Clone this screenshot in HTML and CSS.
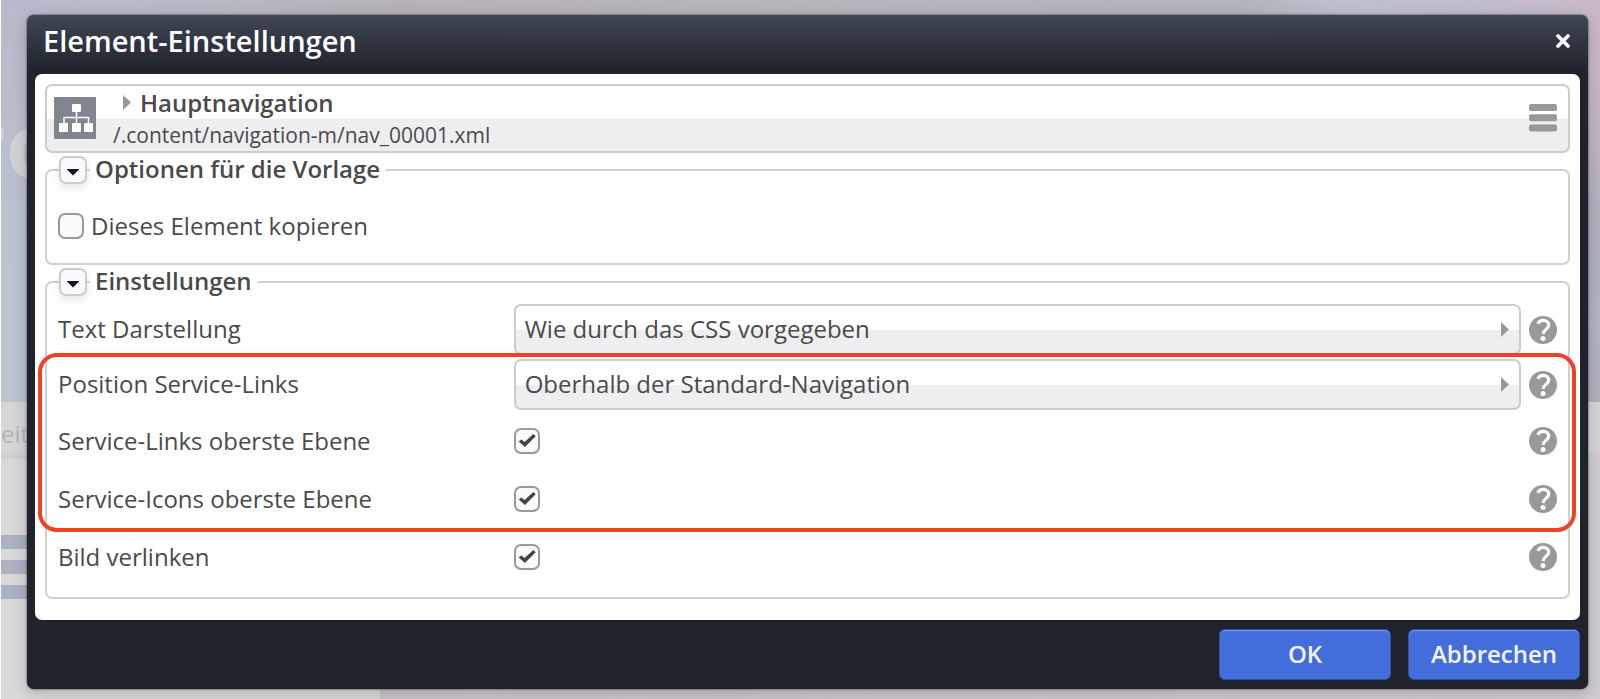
FILE: index.html
```html
<!DOCTYPE html>
<html lang="de">
<head>
<meta charset="utf-8">
<title>Element-Einstellungen</title>
<link rel="stylesheet" href="styles.css">
</head>
<body>
<svg class="symbols" aria-hidden="true">
  <symbol id="help" viewBox="0 0 28 28">
    <circle cx="14" cy="14" r="14" fill="#999"/>
    <path d="M8.8 7.800C10 5.300 11.900 4.400 14.200 4.400c3.200 0 5.500 1.900 5.500 4.600 0 4.200-5.500 4.600-5.500 8.900" fill="none" stroke="#fff" stroke-width="3.200"/>
    <circle cx="14" cy="22.500" r="2.500" fill="#fff"/>
  </symbol>
</svg>
<div class="stage">
  <div class="page" aria-hidden="true">
    <div class="hero"><span class="hero-title">ro</span></div>
    <div class="crumbs">eit</div>
    <div class="content">
      <div class="bars"><i></i><i></i><i></i></div>
    </div>
  </div>

  <main class="dialog" role="dialog" aria-labelledby="dialog-title">
    <header class="dialog-head">
      <h1 id="dialog-title">Element-Einstellungen</h1>
      <button class="close" type="button" aria-label="Schließen">
        <svg width="14" height="14" viewBox="0 0 14 14"><path d="M2 2l10 10M12 2L2 12" stroke="#fff" stroke-width="3.600" stroke-linecap="round"/></svg>
      </button>
    </header>

    <form class="panel">
      <section class="resource">
        <svg class="resource-icon" width="42" height="42" viewBox="0 0 42 42">
          <rect width="42" height="42" rx="1" fill="#808690"/>
          <g fill="#fff">
            <rect x="18" y="7" width="9" height="8" rx="1"/>
            <rect x="5" y="26" width="9" height="9" rx="1"/>
            <rect x="18" y="26" width="9" height="9" rx="1"/>
            <rect x="30" y="26" width="9" height="9" rx="1"/>
          </g>
          <path d="M22.500 14v13M10 27v-6.500h24.500V27" fill="none" stroke="#fff" stroke-width="1.500"/>
        </svg>
        <div class="resource-text">
          <h2><span class="arrow"></span>Hauptnavigation</h2>
          <p>/.content/navigation-m/nav_00001.xml</p>
        </div>
        <button class="menu" type="button" aria-label="Menü">
          <svg width="28" height="28" viewBox="0 0 28 28" fill="#999"><rect width="28" height="7" rx="2"/><rect y="10.300" width="28" height="7" rx="2"/><rect y="20.600" width="28" height="7" rx="2"/></svg>
        </button>
      </section>

      <fieldset class="group">
        <legend>
          <button class="toggle" type="button" aria-label="Optionen einklappen"></button>
          <span>Optionen für die Vorlage</span>
        </legend>
        <div class="copy">
          <input class="check" type="checkbox" id="copy">
          <label for="copy">Dieses Element kopieren</label>
        </div>
      </fieldset>

      <fieldset class="group">
        <legend>
          <button class="toggle" type="button" aria-label="Einstellungen einklappen"></button>
          <span>Einstellungen</span>
        </legend>
        <div class="rows">
          <div class="row">
            <label for="text">Text Darstellung</label>
            <span class="select"><select id="text"><option>Wie durch das CSS vorgegeben</option></select></span>
            <button class="help" type="button" aria-label="Hilfe"><svg><use href="#help"/></svg></button>
          </div>
          <div class="marked">
            <div class="row">
              <label for="position">Position Service-Links</label>
              <span class="select"><select id="position"><option>Oberhalb der Standard-Navigation</option></select></span>
              <button class="help" type="button" aria-label="Hilfe"><svg><use href="#help"/></svg></button>
            </div>
            <div class="row row-check">
              <label for="links">Service-Links oberste Ebene</label>
              <input class="check" type="checkbox" id="links" checked>
              <button class="help" type="button" aria-label="Hilfe"><svg><use href="#help"/></svg></button>
            </div>
            <div class="row row-check">
              <label for="icons">Service-Icons oberste Ebene</label>
              <input class="check" type="checkbox" id="icons" checked>
              <button class="help" type="button" aria-label="Hilfe"><svg><use href="#help"/></svg></button>
            </div>
          </div>
          <div class="row row-check">
            <label for="image">Bild verlinken</label>
            <input class="check" type="checkbox" id="image" checked>
            <button class="help" type="button" aria-label="Hilfe"><svg><use href="#help"/></svg></button>
          </div>
        </div>
      </fieldset>
    </form>

    <footer class="dialog-foot">
      <button class="action" type="button">OK</button>
      <button class="action" type="button">Abbrechen</button>
    </footer>
  </main>
</div>
</body>
</html>
```
FILE: styles.css
```css
* {
  box-sizing: border-box;
}

body {
  margin: 0;
  font-family: "Open Sans", "Noto Sans", sans-serif;
  font-size: 24px;
  line-height: 32px;
  color: #4a4a4a;
}

h1, h2, p {
  margin: 0;
}

button {
  padding: 0;
  border: 0;
  background: none;
  font: inherit;
}

svg {
  display: block;
}

.symbols {
  position: absolute;
  width: 0;
  height: 0;
}

.stage {
  display: grid;
  min-height: 100vh;
}

.page,
.dialog {
  grid-area: 1 / 1;
  min-width: 0;
}

/* Page behind the dialog */
.page {
  display: flex;
  flex-direction: column;
  overflow: hidden;
  border-left: 1px solid #fff;
}

.hero {
  height: 402px;
  padding-top: 88px;
  background:
    linear-gradient(to bottom, transparent, #bac5cf 65%) left / 40px 100% no-repeat,
    linear-gradient(to bottom, transparent 20%, #b2b0be 55%, #b0b4c2 80%, #b4b0be) right / 40px 100% no-repeat,
    linear-gradient(to right, #b8b9cb, #b9b9c4 14%, #b5b1b6 25%, #b9b5bd 50%, #b3b3bc 77%, #bfc0cd 84%, #c2bccb 94%, #cab7c7);
}

.hero-title {
  margin-left: -36px;
  font-size: 90px;
  line-height: 110px;
  font-weight: 700;
  color: #d2d2d5;
}

.crumbs {
  height: 57px;
  padding-top: 16px;
  border-bottom: 6px solid #d4cdd6;
  background: #d6d6d7;
  color: #b5b5b7;
}

.content {
  flex: 1;
  padding-top: 76px;
  background: linear-gradient(to right, #d9d9da 378px, #cac6cb 380px, #d0ccd2);
}

.bars {
  display: grid;
  gap: 11px;
  width: 50%;
}

.bars i {
  height: 14px;
  background: #acb1c3;
}

/* Dialog */
.dialog {
  z-index: 1;
  display: flex;
  flex-direction: column;
  margin: 15px 12px 10px 27px;
  padding: 0 8px 9px;
  border-radius: 7px;
  background: #20232b linear-gradient(to bottom, #404755, #20232b 56px) no-repeat;
  box-shadow: 0 0 2px #20232b, 0 4px 16px rgba(0, 0, 0, 0.2);
}

.dialog-head {
  display: flex;
  align-items: center;
  justify-content: space-between;
  height: 59px;
  padding: 0 10px 7px 8px;
}

.dialog-head h1 {
  font-size: 29px;
  font-weight: 600;
  color: #fff;
}

.panel {
  flex: 1;
  display: flex;
  flex-direction: column;
  gap: 3px;
  padding: 10px 10px 19px;
  border-radius: 7px;
  background: #fff;
}

.resource {
  display: flex;
  align-items: center;
  height: 69px;
  padding: 0 11px 0 7px;
  border: 2px solid #ccc;
  border-radius: 7px;
  background: linear-gradient(to bottom, #fff 50%, #eeeef0 50%);
}

.resource-icon,
.menu {
  margin-bottom: 1px;
}

.resource-text {
  flex: 1;
  padding-left: 17px;
}

.resource h2 {
  display: flex;
  align-items: center;
  gap: 9px;
  padding-left: 10px;
  font-size: 24px;
  font-weight: 600;
}

.resource p {
  font-size: 21px;
}

.arrow,
.select::after {
  width: 8px;
  height: 15px;
  background: #999;
  clip-path: polygon(0 0, 100% 50%, 0 100%);
}

.group {
  min-width: 0;
  margin: 0;
  padding: 0 11px 13px;
  border: 2px solid #d0d0d0;
  border-radius: 7px;
}

.group legend {
  display: flex;
  align-items: center;
  height: 28px;
  margin-left: 1px;
  padding: 0 6px 0 0;
  font-weight: 600;
}

.group legend span {
  margin-left: 8px;
  padding-bottom: 3px;
}

.toggle {
  position: relative;
  width: 28px;
  height: 28px;
  border: 2px solid #ccc;
  border-radius: 7px;
  background: #f9f9fb;
  box-shadow: 0 4px 8px rgba(0, 0, 0, 0.1);
}

.toggle::before {
  content: "";
  display: block;
  width: 14px;
  height: 7px;
  margin: 4px auto 0;
  background: #14161f;
  clip-path: polygon(0 0, 100% 0, 50% 100%);
}

.toggle::after {
  content: "";
  position: absolute;
  top: 11px;
  left: 26px;
  width: 3px;
  height: 2px;
  background: #ccc;
}

.copy {
  display: flex;
  align-items: center;
  gap: 7px;
  height: 66px;
  padding-top: 18px;
}

.check {
  appearance: none;
  flex: none;
  width: 26px;
  height: 26px;
  margin: 0;
  border: 2px solid #999;
  border-radius: 7px;
  background: #fafafc;
}

.check:checked::before {
  content: "";
  display: block;
  width: 17px;
  height: 13px;
  margin: 4px 3px;
  background: #444;
  clip-path: polygon(0 58%, 15% 42%, 35% 62%, 86% 0, 100% 17%, 37% 100%);
}

.rows {
  display: grid;
  gap: 4px;
  padding-top: 8px;
}

.marked {
  position: relative;
  display: grid;
  gap: 4px;
}

.marked::after {
  content: "";
  position: absolute;
  inset: -6px -19px -6px -20px;
  border: 4px solid #ee4226;
  border-radius: 19px;
  pointer-events: none;
}

.row {
  display: grid;
  grid-template-columns: 30.4% 1fr 28px;
  align-items: center;
  height: 51px;
}

.row-check {
  height: 54px;
}

.row label,
.copy label {
  padding-bottom: 1px;
}

.select {
  position: relative;
  margin-right: 8px;
}

.select::after {
  content: "";
  position: absolute;
  top: 18px;
  right: 12px;
  pointer-events: none;
}

select {
  display: block;
  appearance: none;
  width: 100%;
  height: 51px;
  padding: 0 32px 2px 9px;
  border: 2px solid #ccc;
  border-radius: 7px;
  background: linear-gradient(to bottom, #fff 50%, #eeeef0 50%);
  font: inherit;
  color: inherit;
}

.help svg {
  width: 28px;
  height: 28px;
}

.dialog-foot {
  display: flex;
  justify-content: flex-end;
  gap: 17px;
  padding-top: 9px;
}

.action {
  width: 172px;
  height: 51px;
  padding-bottom: 2px;
  border: 1px solid #30509f;
  border-radius: 6px;
  background: #426dda;
  box-shadow: inset 0 1px 1px #7a9aec;
  font-weight: 600;
  color: #f4f4fa;
}
```
